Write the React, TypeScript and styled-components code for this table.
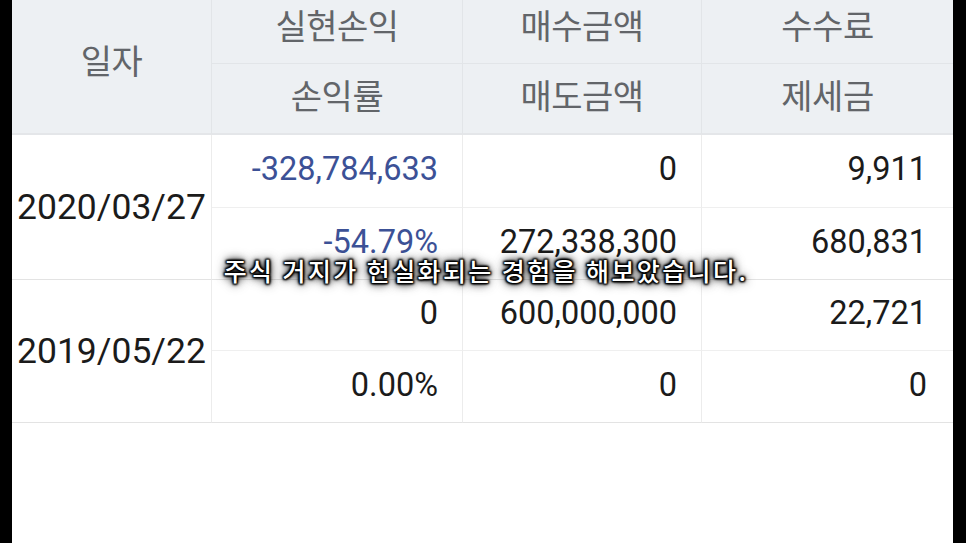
import React from "react";
import styled, { createGlobalStyle } from "styled-components";

const Global = createGlobalStyle`
  html, body { margin: 0; padding: 0; background: #000; }
  body { width: 966px; height: 543px; overflow: hidden; }
`;

const Screen = styled.div`
  position: relative;
  width: 966px;
  height: 543px;
  background: #000;
  display: flex;
  padding: 0 13px 0 12px;
  box-sizing: border-box;
`;

const Panel = styled.div`
  flex: 1;
  background: #fff;
  display: flex;
  flex-direction: column;
`;

const Table = styled.div`
  display: grid;
  grid-template-columns: 200px 251px 239px 1fr;
  font-family: Roboto, "Noto Sans CJK KR", sans-serif;
`;

const HeadCell = styled.div<{ $h?: number; $span?: boolean; $last?: boolean; $bottom?: boolean; $pb?: number }>`
  background: #edf0f3;
  color: #626569;
  font-family: "Noto Sans CJK KR", sans-serif;
  font-size: 34px;
  letter-spacing: -0.5px;
  display: flex;
  align-items: center;
  justify-content: center;
  height: ${(p) => (p.$span ? "auto" : `${p.$h}px`)};
  grid-row: ${(p) => (p.$span ? "span 2" : "auto")};
  border-right: ${(p) => (p.$last ? "none" : "1px solid #e2e5e8")};
  border-bottom: ${(p) => (p.$bottom ? "2px solid #e4e6e9" : "1px solid #e2e5e8")};
  box-sizing: border-box;
  padding-bottom: ${(p) => p.$pb ?? 4}px;
`;

const DateCell = styled.div`
  grid-row: span 2;
  display: flex;
  align-items: center;
  padding-left: 5px;
  font-size: 35.5px;
  color: #1b1b1b;
  border-right: 1px solid #ececec;
  border-bottom: 1px solid #e3e3e3;
  box-sizing: border-box;
`;

const NumCell = styled.div<{ $h: number; $blue?: boolean; $last?: boolean; $bottom?: boolean }>`
  height: ${(p) => p.$h}px;
  display: flex;
  align-items: center;
  justify-content: flex-end;
  padding-right: ${(p) => (p.$last ? "26px" : "24px")};
  padding-bottom: 4px;
  font-size: 32.5px;
  color: ${(p) => (p.$blue ? "#3c5196" : "#1b1b1b")};
  border-right: ${(p) => (p.$last ? "none" : "1px solid #ececec")};
  border-bottom: 1px solid ${(p) => (p.$bottom ? "#e3e3e3" : "#efefef")};
  box-sizing: border-box;
`;

const Subtitle = styled.div`
  position: absolute;
  left: 0;
  right: 0;
  top: 252px;
  text-align: center;
  font-family: "Noto Sans CJK KR", sans-serif;
  font-weight: 500;
  font-size: 25px;
  letter-spacing: 2.4px;
  color: #fff;
  padding-left: 6px;
  text-shadow: 0 0 2px #000, 0 0 3px #000, 0 0 5px #000, 1px 1px 2px #000, -1px -1px 2px #000,
    1px -1px 2px #000, -1px 1px 2px #000, 0 0 9px #000, 0 0 12px rgba(0, 0, 0, 0.8);
`;

type Row = {
  date: string;
  top: [string, string, string];
  bottom: [string, string, string];
  blue: boolean;
  h: [number, number];
};

const rows: Row[] = [
  {
    date: "2020/03/27",
    top: ["-328,784,633", "0", "9,911"],
    bottom: ["-54.79%", "272,338,300", "680,831"],
    blue: true,
    h: [73, 72],
  },
  {
    date: "2019/05/22",
    top: ["0", "600,000,000", "22,721"],
    bottom: ["0.00%", "0", "0"],
    blue: false,
    h: [71, 72],
  },
];

export default function App() {
  return (
    <>
      <Global />
      <Screen>
        <Panel>
          <Table>
            <HeadCell $span $bottom $pb={14}>일자</HeadCell>
            <HeadCell $h={64} $pb={14}>실현손익</HeadCell>
            <HeadCell $h={64} $pb={14}>매수금액</HeadCell>
            <HeadCell $h={64} $pb={14} $last>수수료</HeadCell>
            <HeadCell $h={71} $bottom $pb={8}>손익률</HeadCell>
            <HeadCell $h={71} $bottom $pb={8}>매도금액</HeadCell>
            <HeadCell $h={71} $bottom $pb={8} $last>제세금</HeadCell>
            {rows.map((r) => (
              <React.Fragment key={r.date}>
                <DateCell>{r.date}</DateCell>
                <NumCell $h={r.h[0]} $blue={r.blue}>{r.top[0]}</NumCell>
                <NumCell $h={r.h[0]}>{r.top[1]}</NumCell>
                <NumCell $h={r.h[0]} $last>{r.top[2]}</NumCell>
                <NumCell $h={r.h[1]} $blue={r.blue} $bottom>{r.bottom[0]}</NumCell>
                <NumCell $h={r.h[1]} $bottom>{r.bottom[1]}</NumCell>
                <NumCell $h={r.h[1]} $bottom $last>{r.bottom[2]}</NumCell>
              </React.Fragment>
            ))}
          </Table>
        </Panel>
        <Subtitle>주식 거지가 현실화되는 경험을 해보았습니다.</Subtitle>
      </Screen>
    </>
  );
}
